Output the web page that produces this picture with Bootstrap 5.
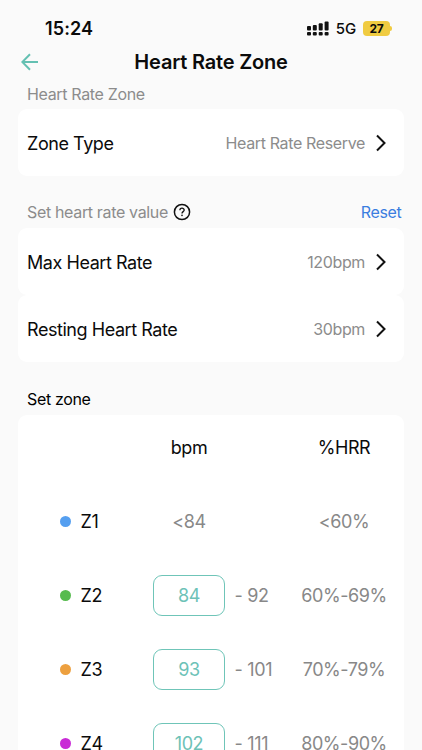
<!DOCTYPE html>
<html lang="en">
<head>
<meta charset="utf-8">
<meta name="viewport" content="width=device-width, initial-scale=1">
<title>Heart Rate Zone</title>
<link href="https://cdn.jsdelivr.net/npm/bootstrap@5.3.0/dist/css/bootstrap.min.css" rel="stylesheet">
<style>
html{overflow:hidden}
body{height:750px;overflow:hidden;background:#fafafa;color:#0b0b0b;font-family:Inter,"Liberation Sans",sans-serif;font-size:18px;line-height:24px;letter-spacing:-.44px}
svg{display:block;flex:none}
.status{height:46px;padding:16px 30px 0 45px}
.clock{font-size:18px;font-weight:600;letter-spacing:.1px;line-height:25px}
.indicators{height:24px}
.net{font-size:15px;letter-spacing:-.1px;font-weight:500;margin:1px 7px 0 7px}
.battery{width:27px;height:15px;border-radius:4px;background:#f0cb41;font-size:12px;line-height:15px;font-weight:700;letter-spacing:-.3px}
.battery-tip{width:2px;height:5px;border-radius:0 2px 2px 0;background:#f0cb41}
.topbar{height:32px;padding-left:21px}
.topbar h1{font-size:20px;line-height:32px;font-weight:600;letter-spacing:-.2px;width:382px;margin-left:-19px}
.caption{font-size:16px;color:#8c8c8c;padding:0 20.5px 0 27px;letter-spacing:-.34px}
.caption-top{height:31px}
.caption-mid{height:52px;padding-bottom:4px}
.caption-zone{height:53px;padding-bottom:4px}
.help{margin:0 0 3px 5px}
.panel{background:#fff;border-radius:9px;margin:0 18px}
.setting{height:67px;padding:1px 17px 0 9px}
.setting-label{padding-top:2px}
.value{font-size:16px;color:#8c8c8c;margin-right:10px;letter-spacing:-.36px}
.reset{color:#3b7de0;text-decoration:none}
.zone-row{display:grid;grid-template-columns:135px 72px 59px 1fr;height:74.2px;align-items:center}
.zone-head{height:69px;padding-bottom:4px}
.zone-name{padding-left:42px;gap:9.5px}
.zone-label,.muted{padding-top:1.5px}
.dot{width:11px;height:11px;border-radius:50%}
.muted{color:#888}
.pct{text-align:center}
.entry{height:41px;border:1px solid #6fc5b8;border-radius:9px;color:#6dc2b7;line-height:40px;text-align:center}
.upto{padding-left:9.5px;letter-spacing:-.3px}
</style>
</head>
<body>
<div class="status d-flex align-items-start">
  <span class="clock me-auto">15:24</span>
  <div class="indicators d-flex align-items-center">
    <svg width="22" height="15" viewBox="0 0 22 15" fill="#111"><rect x="0" y="5" width="4" height="4.5" rx="1"/><rect x="5.8" y="4" width="4" height="5.5" rx="1"/><rect x="11.7" y="2.3" width="4" height="7.2" rx="1"/><rect x="17.6" y=".5" width="4" height="9" rx="1"/><rect x="0" y="11" width="4" height="3.5" rx="1"/><rect x="5.8" y="11" width="4" height="3.5" rx="1"/><rect x="11.7" y="11" width="4" height="3.5" rx="1"/><rect x="17.6" y="11" width="4" height="3.5" rx="1"/></svg>
    <span class="net">5G</span>
    <span class="battery text-center">27</span><span class="battery-tip"></span>
  </div>
</div>
<header class="topbar d-flex align-items-center">
  <svg width="18" height="18" viewBox="0 0 18 18" fill="none" stroke="#64c0b2" stroke-width="2"><path d="M17 9H1.5M9 1.2 1.3 9 9 16.8"/></svg>
  <h1 class="mb-0 text-center">Heart Rate Zone</h1>
</header>
<main>
  <div class="caption caption-top pt-1">Heart Rate Zone</div>
  <section class="panel">
    <div class="setting d-flex align-items-center"><span class="setting-label me-auto">Zone Type</span><span class="value">Heart Rate Reserve</span><svg width="12" height="18" viewBox="0 0 12 18" fill="none" stroke="#111" stroke-width="2"><path d="M2 1.5 9.5 9 2 16.5"/></svg></div>
  </section>
  <div class="caption caption-mid d-flex align-items-end">
    <span>Set heart rate value</span>
    <svg class="help" width="18" height="18" viewBox="0 0 18 18" fill="none" stroke="#111"><circle cx="9" cy="9" r="7.6" stroke-width="1.5"/><path d="M6.9 7.3c0-2.8 4.3-2.7 4.3-.2 0 1.5-2.2 1.6-2.2 3.3" stroke-width="1.3"/><circle cx="9" cy="12.4" r=".8" fill="#111" stroke="none"/></svg>
    <a class="reset ms-auto" href="#">Reset</a>
  </div>
  <section class="panel">
    <div class="setting d-flex align-items-center"><span class="setting-label me-auto">Max Heart Rate</span><span class="value">120bpm</span><svg width="12" height="18" viewBox="0 0 12 18" fill="none" stroke="#111" stroke-width="2"><path d="M2 1.5 9.5 9 2 16.5"/></svg></div>
  </section>
  <section class="panel">
    <div class="setting d-flex align-items-center"><span class="setting-label me-auto">Resting Heart Rate</span><span class="value">30bpm</span><svg width="12" height="18" viewBox="0 0 12 18" fill="none" stroke="#111" stroke-width="2"><path d="M2 1.5 9.5 9 2 16.5"/></svg></div>
  </section>
  <div class="caption caption-zone text-black d-flex align-items-end">Set zone</div>
  <section class="panel">
    <div class="zone-row zone-head"><span></span><span class="text-center">bpm</span><span></span><span class="pct">%HRR</span></div>
    <div class="zone-row"><div class="zone-name d-flex align-items-center"><i class="dot" style="background:#559ff0"></i><span class="zone-label">Z1</span></div><span class="muted text-center">&lt;84</span><span></span><span class="pct muted">&lt;60%</span></div>
    <div class="zone-row"><div class="zone-name d-flex align-items-center"><i class="dot" style="background:#57bb4f"></i><span class="zone-label">Z2</span></div><div class="entry">84</div><span class="muted upto">- 92</span><span class="pct muted">60%-69%</span></div>
    <div class="zone-row"><div class="zone-name d-flex align-items-center"><i class="dot" style="background:#eda03f"></i><span class="zone-label">Z3</span></div><div class="entry">93</div><span class="muted upto">- 101</span><span class="pct muted">70%-79%</span></div>
    <div class="zone-row"><div class="zone-name d-flex align-items-center"><i class="dot" style="background:#c92bd6"></i><span class="zone-label">Z4</span></div><div class="entry">102</div><span class="muted upto">- 111</span><span class="pct muted">80%-90%</span></div>
  </section>
</main>
<script src="https://cdn.jsdelivr.net/npm/bootstrap@5.3.0/dist/js/bootstrap.bundle.min.js"></script>
</body>
</html>
